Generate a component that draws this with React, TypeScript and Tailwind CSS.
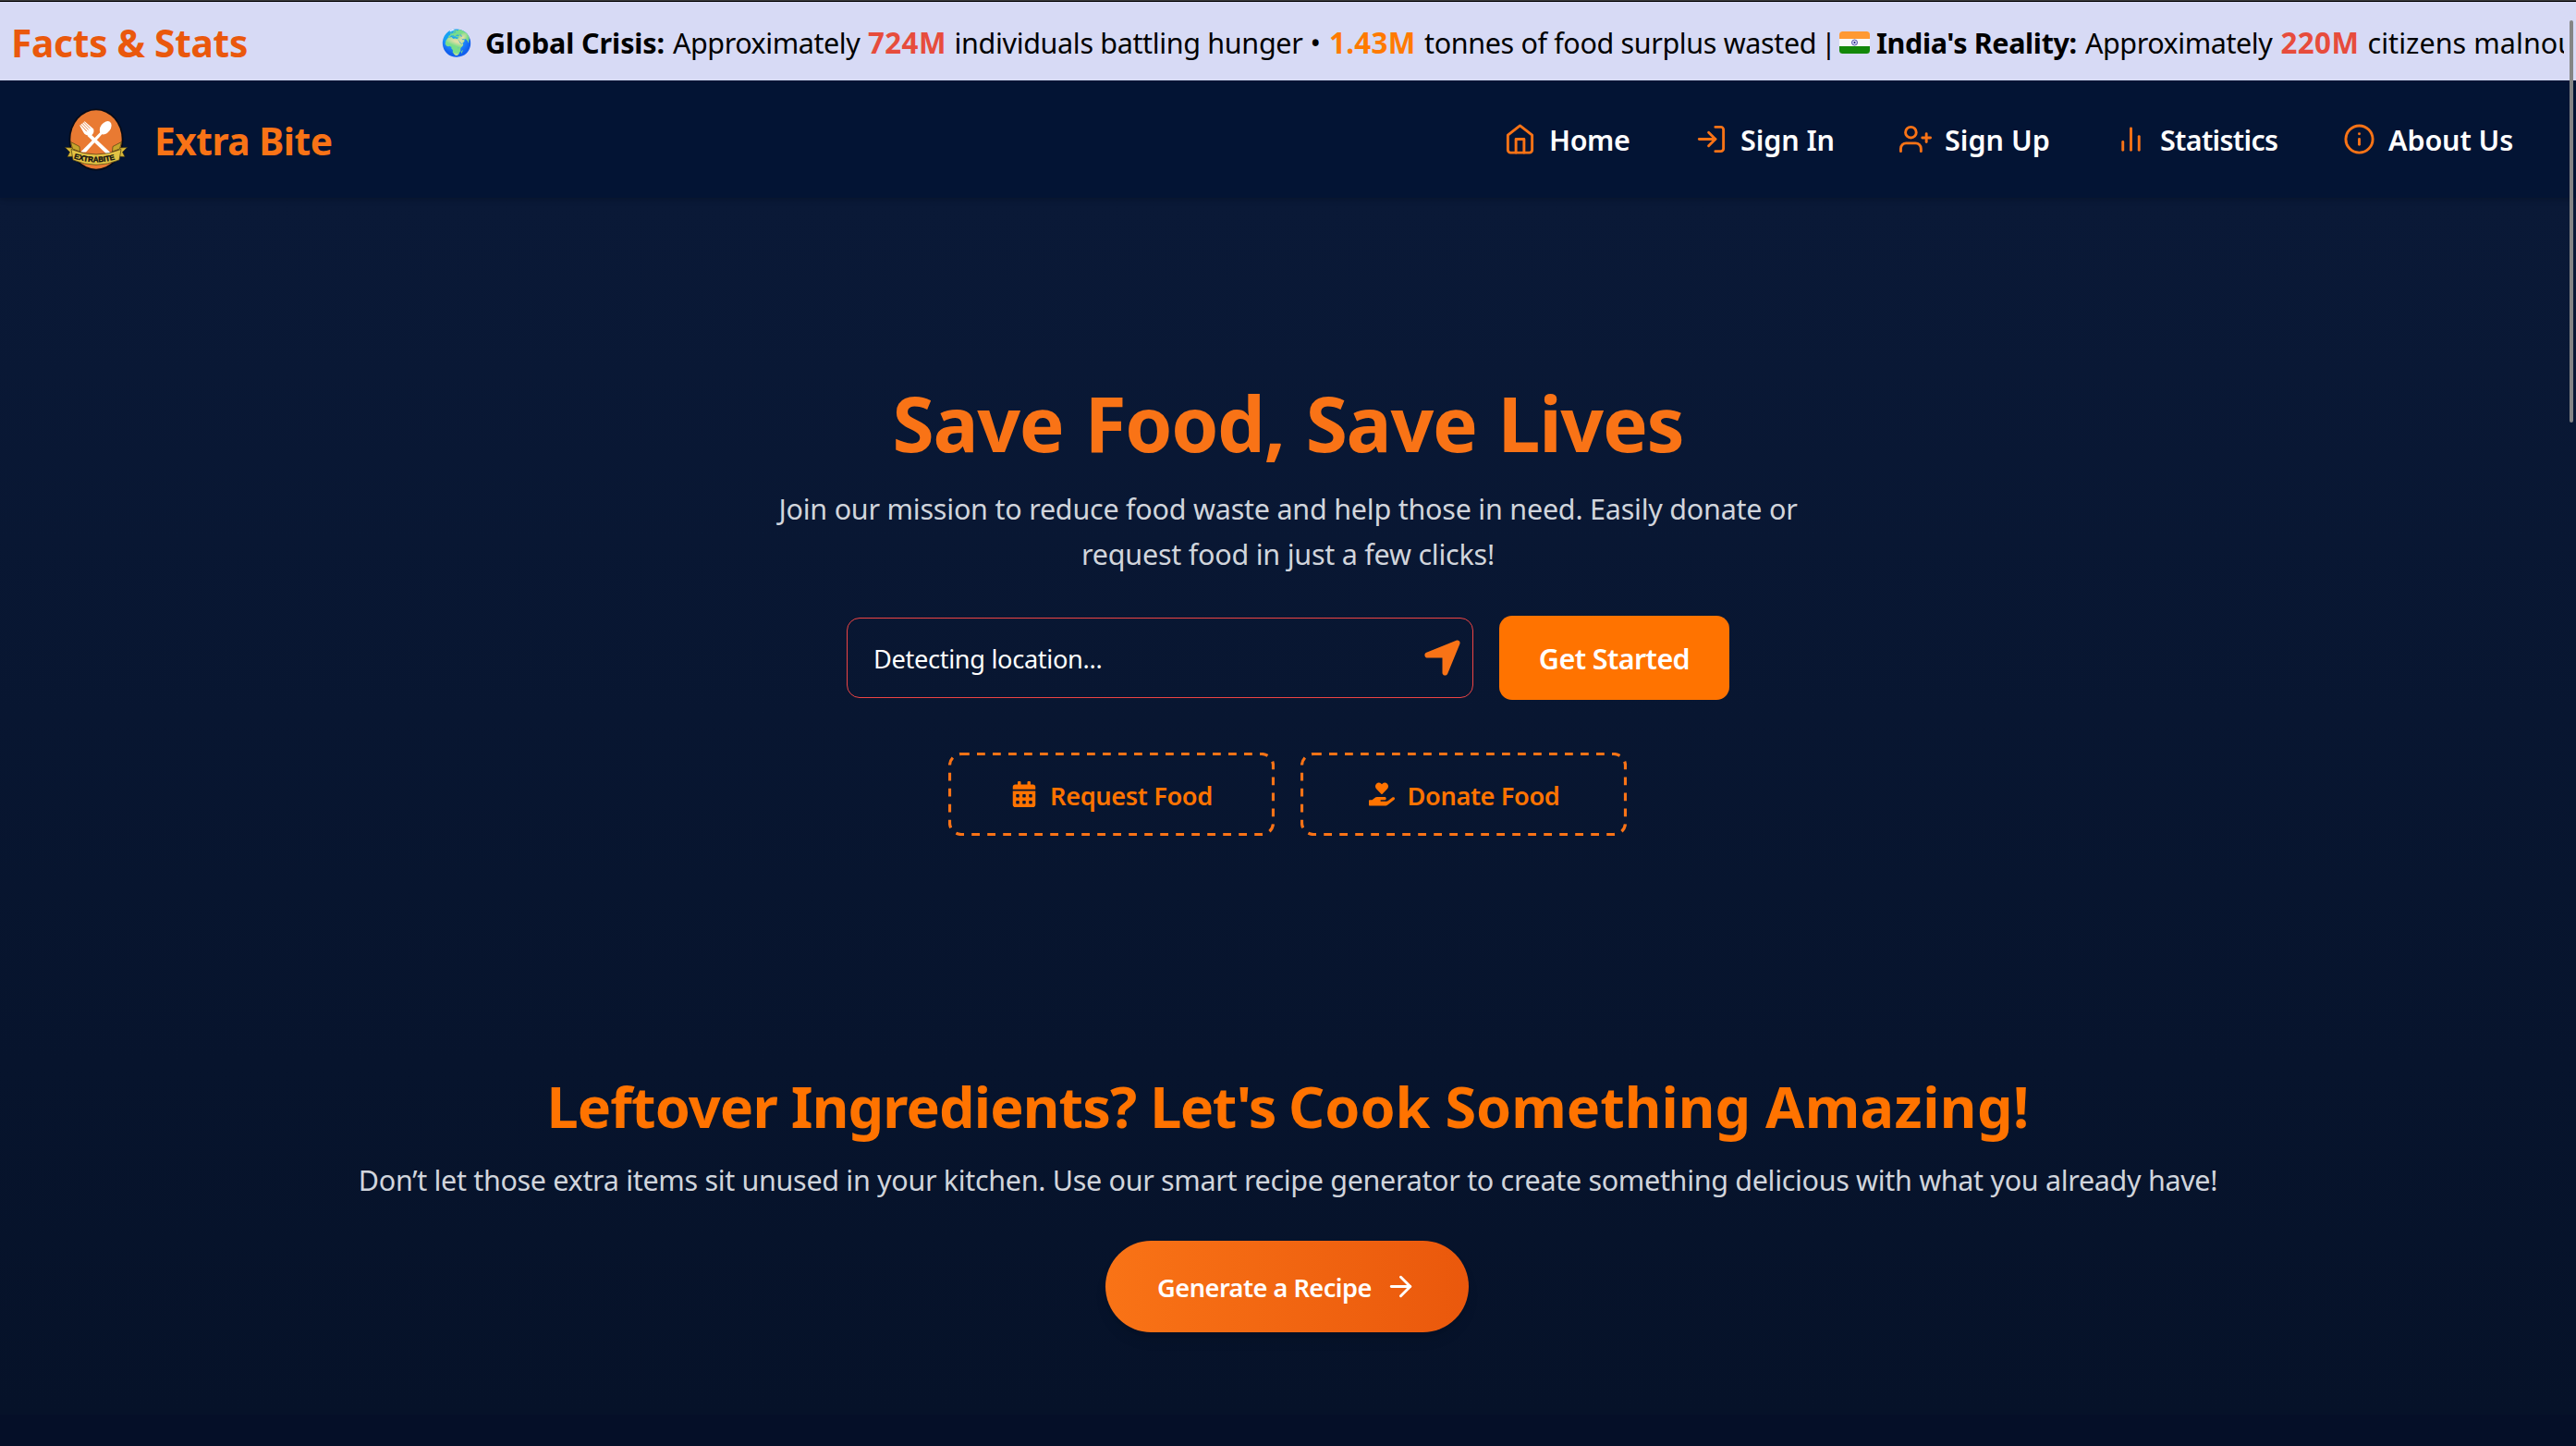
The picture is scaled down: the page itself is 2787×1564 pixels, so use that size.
import type { ReactNode } from "react";
import { FiArrowRight, FiBarChart2, FiHome, FiInfo, FiLogIn, FiUserPlus } from "react-icons/fi";
import { FaCalendarAlt, FaHandHoldingHeart } from "react-icons/fa";
import { FaLocationArrow } from "react-icons/fa6";

function IndiaFlag() {
  return (
    <svg viewBox="0 0 33 24" className="h-6 w-[33px]">
      <defs>
        <clipPath id="flag">
          <rect width="33" height="24" rx="3.5" />
        </clipPath>
      </defs>
      <g clipPath="url(#flag)">
        <rect width="33" height="24" fill="#f8f8f8" />
        <rect width="33" height="8" fill="#ff9933" />
        <rect y="16" width="33" height="8" fill="#138808" />
      </g>
      <circle cx="16.5" cy="12" r="3" fill="#d5d5f0" stroke="#5c5cae" strokeWidth="1" />
      <circle cx="16.5" cy="12" r="1" fill="#1a1a80" />
    </svg>
  );
}

function Logo() {
  return (
    <svg viewBox="0 0 70 70" className="h-[70px] w-[70px]">
      <ellipse cx="35" cy="35" rx="29.5" ry="33.5" fill="#060b18" />
      <ellipse cx="35" cy="35" rx="27.7" ry="31.7" fill="#e97a32" />
      <g fill="#fff">
        <path d="M28 28 52 50.6l-2.6 2.9L25.6 31z" />
        <path d="M42 28.5 24 48.6h-5.8L40 26.4z" />
        <ellipse cx="45.2" cy="22.2" rx="5.4" ry="8" transform="rotate(36 45.2 22.2)" />
        <path d="M17.2 19.8 22.6 15.2 32.2 23.4Q33.6 29 28.6 30.8 23.2 31 21.2 27z" />
      </g>
      <g stroke="#e97a32" strokeWidth="0.9" strokeLinecap="round">
        <path d="M18.2 18.7l6.4 7.2M19.8 17.2l6.6 7M21.3 15.8l6.8 6.8" />
      </g>
      <g stroke="#4a3d10" strokeWidth="0.7" strokeLinejoin="round">
        <path d="M1.5 43.5 11 44 13 53 4 53.5 6.5 48.5z" fill="#d9b93a" />
        <path d="M68.5 43.5 59 44 57 53 66 53.5 63.5 48.5z" fill="#d9b93a" />
        <path d="M7.5 37.5 17 42.5 17.5 48 9.5 45z" fill="#c7a52c" />
        <path d="M62.5 37.5 53 42.5 52.5 48 60.5 45z" fill="#c7a52c" />
        <path d="M8 45.5Q35 56.5 62 45.5L60 57Q35 67.5 10 57z" fill="#e2c344" />
      </g>
      <path id="ribbon" d="M10 55Q35 63.6 60 55" fill="none" />
      <text fontFamily="Liberation Sans, sans-serif" fontSize="8" fontWeight="700" fill="#111" stroke="#111" strokeWidth="0.4">
        <textPath href="#ribbon" startOffset="0.8">
          EXTRABITE
        </textPath>
      </text>
    </svg>
  );
}

const segment = "shrink-0 whitespace-nowrap";

function Ticker() {
  return (
    <div className="flex h-[85px] items-center bg-[#d7daf5] pt-[3px] text-black">
      <div className="w-[477px] shrink-0 whitespace-nowrap pt-px pl-[12px] text-[40.7px] font-bold tracking-[-0.3px] text-[#ea580c]">
        Facts &amp; Stats
      </div>
      <div className="flex w-[2297px] items-center overflow-hidden text-[30.5px] leading-[50px]">
        <span className={`${segment} w-[48px] text-[27.5px]`}>🌍</span>
        <b className={`${segment} w-[203px] tracking-[-0.1px]`}>Global Crisis:</b>
        <span className={`${segment} w-[211px] tracking-[-0.45px]`}>Approximately</span>
        <b className={`${segment} w-[93.5px] text-[31.3px] tracking-[0.4px] text-[#e74c3c]`}>724M</b>
        <span className={`${segment} w-[385px] tracking-[-0.34px]`}>individuals battling hunger</span>
        <span className={`${segment} w-[20.5px]`}>•</span>
        <b className={`${segment} w-[103px] text-[31.3px] tracking-[0.3px] text-[#ff7a00]`}>1.43M</b>
        <span className={`${segment} w-[429px] tracking-[-0.36px]`}>tonnes of food surplus wasted</span>
        <span className={`${segment} w-[20px]`}>|</span>
        <span className={`${segment} w-[40px]`}>
          <IndiaFlag />
        </span>
        <b className={`${segment} w-[226px] tracking-[-0.35px]`}>India&apos;s Reality:</b>
        <span className={`${segment} w-[211.5px] tracking-[-0.45px]`}>Approximately</span>
        <b className={`${segment} w-[94px] text-[31.3px] tracking-[0.4px] text-[#e74c3c]`}>220M</b>
        <span className={`${segment} tracking-[0.05px]`}>citizens malnourished</span>
      </div>
    </div>
  );
}

function NavItem({ icon, label, size }: { icon: ReactNode; label: string; size: string }) {
  return (
    <a className={`flex shrink-0 items-center gap-[14px] whitespace-nowrap ${size}`}>
      <span className="text-[35px] text-[#f97316]">{icon}</span>
      <span className="pt-[2px] text-[30.5px] font-semibold">{label}</span>
    </a>
  );
}

function Navbar() {
  return (
    <nav className="relative flex h-[127px] items-center justify-between bg-[#031434] pr-[66px] pl-[69px] text-white shadow-md">
      <div className="flex items-center gap-[28px]">
        <Logo />
        <span className="pt-[4px] text-[40.7px] font-bold tracking-[-0.5px] text-[#f97316]">Extra Bite</span>
      </div>
      <div className="flex gap-[70px]">
        <NavItem icon={<FiHome />} label="Home" size="w-[137px] tracking-[-0.4px]" />
        <NavItem icon={<FiLogIn />} label="Sign In" size="w-[151px] tracking-[-0.1px]" />
        <NavItem icon={<FiUserPlus />} label="Sign Up" size="w-[163px] tracking-[0px]" />
        <NavItem icon={<FiBarChart2 />} label="Statistics" size="w-[177px] tracking-[-0.7px]" />
        <NavItem icon={<FiInfo />} label="About Us" size="w-[186px] tracking-[-0.1px]" />
      </div>
    </nav>
  );
}

function OutlineButton({ icon, label }: { icon: ReactNode; label: string }) {
  return (
    <button className="relative flex h-[90px] w-[353px] items-center justify-center gap-[14px] pl-[2px] text-[27.2px] font-semibold tracking-[-0.38px] text-[#ff7300]">
      <svg viewBox="0 0 353 90" className="absolute inset-0 h-full w-full" fill="none">
        <rect
          x="1.5"
          y="1.5"
          width="350"
          height="87"
          rx="12.5"
          stroke="#f97316"
          strokeWidth="3.2"
          strokeDasharray="8.8 8.2"
        />
      </svg>
      <span className="text-[28px]">{icon}</span>
      <span className="pt-[4px]">{label}</span>
    </button>
  );
}

export default function App() {
  return (
    <div className="relative flex h-[1564px] w-[2787px] flex-col overflow-hidden bg-[#050f28] font-['Noto_Sans','Open_Sans',sans-serif]">
      <div className="h-[2px] shrink-0 border-b border-black bg-[#3c3c3c]" />
      <Ticker />
      <Navbar />
      <main className="flex h-[1316px] flex-col items-center bg-linear-to-b from-[#0a1937] to-[#061229]">
        <h1 className="mt-[201px] text-[82px] leading-[84px] font-bold tracking-[-1.3px] text-[#f97316] [word-spacing:3px]">
          Save Food, Save Lives
        </h1>
        <p className="mt-[27px] w-[1176px] text-center text-[30.5px] leading-[49px] tracking-[-0.23px] text-gray-300">
          Join our mission to reduce food waste and help those in need. Easily donate or request food in just a few
          clicks!
        </p>
        <div className="mt-[42px] flex items-center gap-[28px]">
          <div className="flex h-[87px] w-[678px] items-center justify-between rounded-[14px] border border-[#ef4444] pr-[9px] pl-[28px] text-white">
            <span className="pt-[4px] text-[27.2px] tracking-[-0.34px]">Detecting location...</span>
            <FaLocationArrow className="text-[47px] text-[#f97316]" />
          </div>
          <button className="h-[91px] w-[249px] rounded-[14px] bg-[#ff7300] pt-[3px] text-[30.5px] font-semibold tracking-[-0.6px] text-white">
            Get Started
          </button>
        </div>
        <div className="mt-[57px] mr-[2px] flex gap-[28px]">
          <OutlineButton icon={<FaCalendarAlt />} label="Request Food" />
          <OutlineButton icon={<FaHandHoldingHeart />} label="Donate Food" />
        </div>
        <h2 className="mt-[261px] text-[61.1px] leading-[63px] font-bold text-[#ff7300]">
          <span className="tracking-[-0.88px]">Leftover Ingredients? </span>
          <span className="tracking-[-1.6px]">Let&apos;s </span>Cook Something <span className="tracking-[0.4px]">Amazing!</span>
        </h2>
        <p className="mt-[24px] text-[30.5px] leading-[49px] tracking-[-0.32px] text-gray-300">
          Don’t let those extra items sit unused in your kitchen. Use our smart recipe generator to create something
          delicious with what you already have!
        </p>
        <button className="mt-[41px] mr-[2px] flex h-[99px] w-[393px] items-center justify-center gap-[14px] rounded-full bg-linear-to-r from-[#f97316] to-[#ea580c] text-[27.2px] font-semibold tracking-[-0.52px] text-white shadow-lg">
          <span className="pt-[4px]">Generate a Recipe</span>
          <FiArrowRight className="text-[35px]" />
        </button>
      </main>
      <div className="absolute top-[22px] left-[2780px] h-[435px] w-1 rounded-full bg-[#858585]" />
    </div>
  );
}
